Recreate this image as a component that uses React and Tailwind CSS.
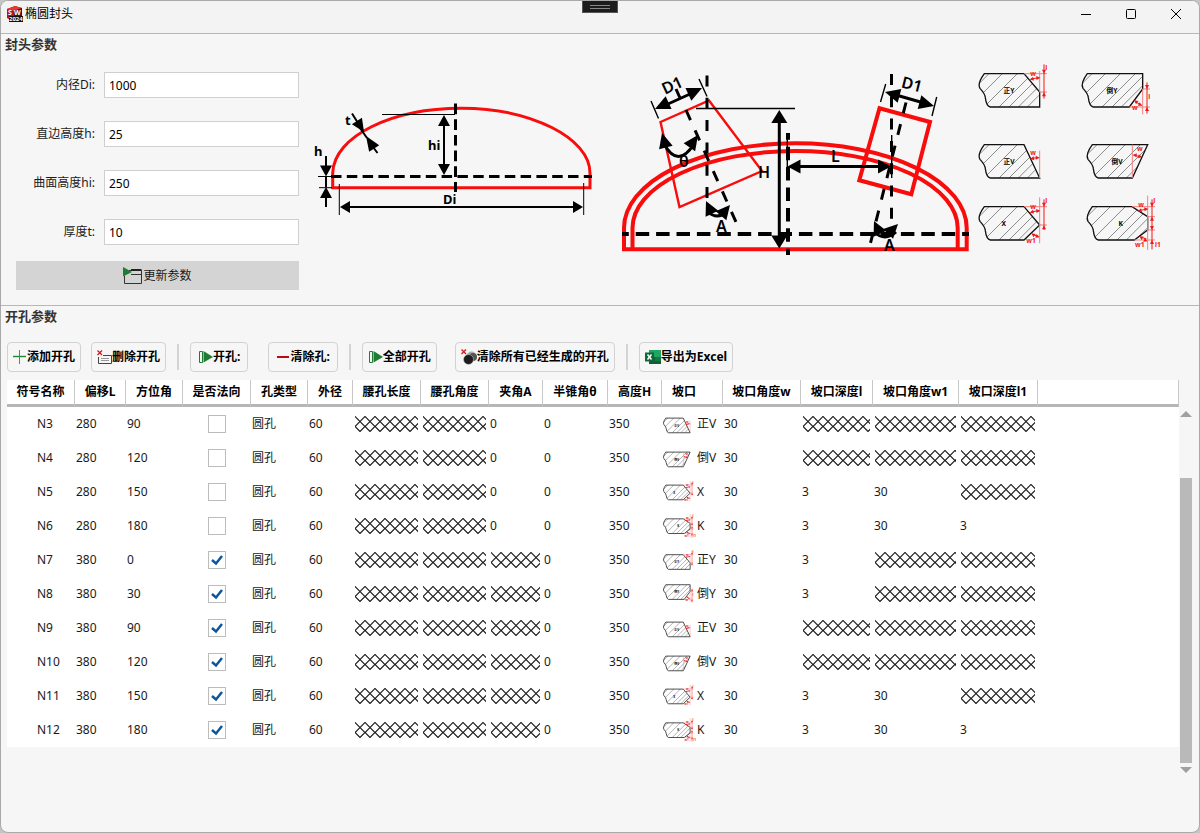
import { useId } from "react";
import clsx from "clsx";

const FIELDS = [
  { id: "di", label: "内径Di:", value: "1000" },
  { id: "h", label: "直边高度h:", value: "25" },
  { id: "hi", label: "曲面高度hi:", value: "250" },
  { id: "t", label: "厚度t:", value: "10" },
];

const COLUMNS = [
  { title: "符号名称", width: "w-[68px]" },
  { title: "偏移L", width: "w-[51px]" },
  { title: "方位角", width: "w-[57px]" },
  { title: "是否法向", width: "w-[68px]" },
  { title: "孔类型", width: "w-[57px]" },
  { title: "外径", width: "w-[45px]" },
  { title: "腰孔长度", width: "w-[68px]" },
  { title: "腰孔角度", width: "w-[68px]" },
  { title: "夹角A", width: "w-[54px]" },
  { title: "半锥角θ", width: "w-[65px]" },
  { title: "高度H", width: "w-[54px]" },
  { title: "坡口", width: "w-[61px]", left: true },
  { title: "坡口角度w", width: "w-[78px]" },
  { title: "坡口深度l", width: "w-[72px]" },
  { title: "坡口角度w1", width: "w-[86px]" },
  { title: "坡口深度l1", width: "w-[79px]" },
];

// null = the parameter does not apply, the cell is hatched
const ROWS = [
  { name: "N3", offset: 280, azimuth: 90, normal: false, groove: "正V", l: null, w1: null, l1: null },
  { name: "N4", offset: 280, azimuth: 120, normal: false, groove: "倒V", l: null, w1: null, l1: null },
  { name: "N5", offset: 280, azimuth: 150, normal: false, groove: "X", l: 3, w1: 30, l1: null },
  { name: "N6", offset: 280, azimuth: 180, normal: false, groove: "K", l: 3, w1: 30, l1: 3 },
  { name: "N7", offset: 380, azimuth: 0, normal: true, groove: "正Y", l: 3, w1: null, l1: null },
  { name: "N8", offset: 380, azimuth: 30, normal: true, groove: "倒Y", l: 3, w1: null, l1: null },
  { name: "N9", offset: 380, azimuth: 90, normal: true, groove: "正V", l: null, w1: null, l1: null },
  { name: "N10", offset: 380, azimuth: 120, normal: true, groove: "倒V", l: null, w1: null, l1: null },
  { name: "N11", offset: 380, azimuth: 150, normal: true, groove: "X", l: 3, w1: 30, l1: null },
  { name: "N12", offset: 380, azimuth: 180, normal: true, groove: "K", l: 3, w1: 30, l1: 3 },
];

// right side of each plate, starting from the lower left corner
const GROOVES = {
  "正Y": { edge: "H182 V55 L135 0", left: -3, top: -32, height: 137 },
  "倒Y": { edge: "H142 L182 46 V0", left: 12, top: -5, height: 131 },
  "正V": { edge: "H182 L135 0", left: -3, top: -28, height: 134 },
  "倒V": { edge: "H136 L182 0", left: -3, top: -28, height: 134 },
  X: { edge: "H135 L182 55 L135 0", left: -3, top: -28, height: 146 },
  K: { edge: "H142 L182 70 V30 L135 0", left: -3, top: -33, height: 165 },
};

const HATCH = "M-70 100L30 0M-30 100L70 0M15 100L115 0M60 100L160 0M90 100L190 0M118 100L218 0M145 100L245 0";

/* ---------- drawings ---------- */

// arrow head with its tip at x,y; angle 0 points right
function Head({ x, y, angle, len = 10, half = 5 }) {
  return (
    <polygon
      points={`0,0 ${-len},${-half} ${-len},${half}`}
      transform={`translate(${x} ${y}) rotate(${angle})`}
      fill="#000"
    />
  );
}

function GrooveMarks({ type }) {
  const dim = { stroke: "#f01818", strokeWidth: 3, fill: "none" };
  const thin = { stroke: "#f58080", strokeWidth: 3, fill: "none" };
  const head = (x, y, angle) => (
    <polygon points="0,0 -12,-6 -12,6" fill="#f01818" transform={`translate(${x} ${y}) rotate(${angle})`} />
  );
  const text = (x, y, t) => (
    <text x={x} y={y} fontSize="20" fontWeight="700" fill="#f01818">
      {t}
    </text>
  );
  switch (type) {
    case "正Y":
      return (
        <>
          <path d="M135 0H204M182 -8V55H204" {...thin} />
          <path d="M156 16L180 12M195 -28V75" {...dim} />
          {head(152, 18, 165)}
          {head(184, 12, -5)}
          {head(195, 0, 90)}
          {head(195, 56, -90)}
          {text(154, 7, "w")}
          {text(199, -12, "l")}
        </>
      );
    case "倒Y":
      return (
        <>
          <path d="M182 46V122M182 46H204M142 100H204" {...thin} />
          <path d="M160 84L178 94M195 26V120" {...dim} />
          {head(156, 80, 215)}
          {head(181, 96, 25)}
          {head(195, 46, 90)}
          {head(195, 100, -90)}
          {text(150, 109, "w")}
          {text(199, 77, "l")}
        </>
      );
    case "正V":
      return (
        <>
          <path d="M182 18V100" {...thin} />
          <path d="M158 41L178 39" {...dim} />
          {head(153, 43, 170)}
          {head(182, 39, 0)}
          {text(154, 31, "w")}
        </>
      );
    case "倒V":
      return (
        <>
          <path d="M136 0V100" {...thin} />
          <path d="M140 32L162 36" {...dim} />
          {head(137, 31, 185)}
          {head(166, 37, 10)}
          {text(150, 19, "w")}
        </>
      );
    case "X":
      return (
        <>
          <path d="M135 0H204M182 -28V110M182 55H204" {...thin} />
          <path d="M156 16L180 12M195 -22V70M160 83L178 90" {...dim} />
          {head(152, 18, 165)}
          {head(184, 12, -5)}
          {head(195, 0, 90)}
          {head(195, 56, -90)}
          {head(157, 80, 215)}
          {head(182, 92, 20)}
          {text(154, 7, "w")}
          {text(199, -10, "l")}
          {text(142, 110, "w1")}
        </>
      );
    default:
      return (
        <>
          <path d="M135 0H204M182 -33V130M182 30H204M182 70H204M142 100H204" {...thin} />
          <path d="M156 12L180 7M195 -22V128M162 92L178 96" {...dim} />
          {head(152, 14, 165)}
          {head(184, 7, -5)}
          {head(195, 0, 90)}
          {head(195, 30, -90)}
          {head(195, 70, 90)}
          {head(195, 100, -90)}
          {head(157, 88, 215)}
          {head(182, 104, 20)}
          {text(154, 0, "w")}
          {text(199, -10, "l")}
          {text(144, 122, "w1")}
          {text(204, 121, "l1")}
        </>
      );
  }
}

function Groove({ type, small }) {
  const clip = useId();
  const { edge, left, top, height } = GROOVES[type];
  const shape = `M16 0Q-6 30 3 44Q18 60 19 72Q22 98 34 100${edge}Z`;
  return (
    <svg
      viewBox={small ? `-3 ${top} 225 ${height}` : `${left} -35 228 165`}
      className={clsx("overflow-visible", small ? "w-[33px] shrink-0" : "h-[55px] w-[76px]")}
      fontFamily="Noto Sans, Noto Sans CJK SC, sans-serif"
    >
      <clipPath id={clip}>
        <path d={shape} />
      </clipPath>
      <path d={HATCH} stroke="#555" strokeWidth={small ? 3 : 2} clipPath={`url(#${clip})`} />
      <path d={shape} fill="none" stroke="#111" strokeWidth={small ? 5 : 4} />
      <text
        x={{ X: 74, K: 101 }[type] ?? 90}
        y="58"
        fontSize="20"
        fontWeight="700"
        textAnchor="middle"
        fill="#000"
      >
        {type}
      </text>
      <GrooveMarks type={type} />
    </svg>
  );
}

function HeadDiagram() {
  return (
    <svg
      viewBox="0 0 300 150"
      className="mt-2 h-[150px] w-[300px] shrink-0"
      fontFamily="Noto Sans, sans-serif"
      fontWeight="700"
      fontSize="13"
    >
      <path d="M22.7 107.7V93C24 56 82 28.3 151.5 28.3S280 58 280 93V107.7Z" fill="none" stroke="#f80c0c" strokeWidth="3" />
      <path d="M21 96.5H282" stroke="#000" strokeWidth="3" strokeDasharray="10.5 5.3" />
      <path d="M145.5 23.5V112" stroke="#000" strokeWidth="3" strokeDasharray="10.7 5" />
      <path d="M72 34.5H145M8 96.5H22M9 107.7H22M29.3 104V135M273.7 103V135" stroke="#000" />
      <path d="M134 42V88M36 127H268M16 76V90M16 97V107M16 113V127" stroke="#000" strokeWidth="2" />
      <path d="M42 33.5L48 43M50 48L57 58M60 63L67.5 73" stroke="#000" strokeWidth="2" />
      <Head x={134} y={35} angle={-90} half={6} len={11} />
      <Head x={134} y={95} angle={90} half={6} len={11} />
      <Head x={30} y={127} angle={180} half={6} />
      <Head x={273} y={127} angle={0} half={6} />
      <Head x={16} y={96.5} angle={90} half={6} len={11} />
      <Head x={16} y={107} angle={-90} half={6} len={11} />
      <Head x={54} y={52} angle={57} half={6} len={13} />
      <Head x={56} y={56} angle={237} half={6} len={15} />
      <text x="4" y="76">h</text>
      <text x="35" y="45">t</text>
      <text x="118" y="70">hi</text>
      <text x="133" y="124">Di</text>
    </svg>
  );
}

function NozzleDiagram() {
  return (
    <svg
      viewBox="0 0 368 210"
      className="-mt-3 h-[210px] w-[368px] shrink-0"
      fontFamily="Noto Sans, sans-serif"
      fontWeight="600"
      fontSize="16"
    >
      <g fill="none" stroke="#f80c0c" strokeWidth="4">
        <path d="M14 189.3V168A171.3 84.7 0 0 1 356.7 168V189.3Z" />
        <path d="M22.5 189V168A162.6 77 0 0 1 347.7 168V189" />
        <path d="M269.5 48.3L320 62L301.3 134.3L249.3 120.3Z" />
        <path d="M50.5 62L99 40.5L152 111L69.5 147Z" strokeWidth="2.4" />
      </g>
      <g stroke="#000" strokeWidth="4" strokeDasharray="13.5 6.9" strokeDashoffset="6.7">
        <path d="M12 174H359" />
        <path d="M178 73V195" />
      </g>
      <g stroke="#000" strokeWidth="3" strokeDasharray="11 11.3">
        <path d="M97 15.5V142" />
        <path d="M281.5 14V162" />
        <path d="M76 50L126 162" />
        <path d="M296 42.5L260.5 183" />
      </g>
      <path
        d="M86 48.5H185M41 41L48.5 58.5M89 19L97 36.5M177.3 73V107M275.7 24L270.5 42M326.7 37L322 56M281.7 75V118"
        stroke="#000"
        strokeWidth="1.4"
      />
      <path d="M169.3 60V178M188 106.5H272M58 44L80 34M66 29L70 38M286 35L314 43" stroke="#000" strokeWidth="3" />
      <Head x={169.3} y={50} angle={-90} len={13} half={8} />
      <Head x={169.3} y={188.5} angle={90} len={13} half={8} />
      <Head x={177.5} y={106.5} angle={180} len={13} half={7} />
      <Head x={281} y={106.5} angle={0} len={13} half={7} />
      <Head x={45} y={49} angle={155} len={15} half={7} />
      <Head x={92} y={28} angle={-25} len={15} half={7} />
      <Head x={275} y={32} angle={195} len={15} half={7} />
      <Head x={324} y={46} angle={15} len={15} half={7} />

      <g fill="none" stroke="#000" strokeWidth="3">
        <path d="M54 84Q68 109 84 84" />
        <path d="M98 152Q107 160 117 152" />
        <path d="M264 172Q275 182 286 172" />
      </g>
      <Head x={52} y={73} angle={-105} len={15} half={7} />
      <Head x={88} y={75} angle={-55} len={15} half={7} />
      <Head x={96} y={141} angle={-115} len={14} half={7} />
      <Head x={120} y={145} angle={-50} len={14} half={7} />
      <Head x={264} y={161} angle={-115} len={14} half={7} />
      <Head x={288} y={164} angle={-45} len={14} half={7} />

      <text x="62" y="31" textAnchor="middle" transform="rotate(-25 62 25)">D1</text>
      <text x="302" y="30" textAnchor="middle" transform="rotate(14 302 24)">D1</text>
      <text x="69" y="107">θ</text>
      <text x="148" y="118">H</text>
      <text x="221" y="102">L</text>
      <text x="106" y="172">A</text>
      <text x="274" y="191">A</text>
    </svg>
  );
}

function Hatched() {
  const id = useId();
  return (
    <svg className="block h-4 w-full" aria-hidden="true">
      <pattern id={id} width="10" height="16" patternUnits="userSpaceOnUse">
        <path
          d="M-1 -0.5L10 10.5M11 -0.5L0 10.5M0 10.5L5 15.5L10 10.5M-1 11.5L0 10.5M11 11.5L10 10.5"
          fill="none"
          stroke="#1c1c1c"
          strokeWidth="1.2"
        />
      </pattern>
      <rect width="100%" height="16" fill={`url(#${id})`} />
    </svg>
  );
}

/* ---------- icons ---------- */

function AppIcon() {
  return (
    <svg viewBox="0 0 16 16" className="size-4" fontFamily="Noto Sans, sans-serif" fontWeight="700">
      <path d="M0 3L8 0L15 2V12L7 16L0 12Z" fill="#c01414" />
      <path d="M0 3L8 0L15 2L7 5Z" fill="#e23a30" />
      <path d="M7 5L15 2V12L7 16Z" fill="#5c0b0b" />
      <text x="1" y="9" fontSize="7" fill="#fff">S</text>
      <text x="7" y="9" fontSize="7" fill="#fff">W</text>
      <rect x="2" y="10" width="14" height="6" fill="#111" />
      <text x="2" y="15" fontSize="6" fill="#fff">2024</text>
    </svg>
  );
}

function UpdateIcon() {
  return (
    <svg viewBox="0 0 20 18" className="h-[18px] w-5">
      <path d="M6 3.5H18.5V16.5H1.5V9" fill="none" stroke="#333" />
      <path d="M8 3H18.5" stroke="#222" strokeWidth="2" />
      <path d="M8 7.5H18" stroke="#333" />
      <path d="M0 0L9 5L0 9.5Z" fill="#1e7d32" />
    </svg>
  );
}

function AddIcon() {
  return (
    <svg viewBox="0 0 14 14" className="size-3.5">
      <path d="M6.5 0V14" stroke="#777" />
      <path d="M0 6.5H13" stroke="#1e8a36" strokeWidth="1.4" />
    </svg>
  );
}

function DeleteIcon() {
  return (
    <svg viewBox="0 0 15 15" className="size-[15px]" fill="none">
      <path d="M6 5.5H14.5V13.5H1.5V7" stroke="#444" />
      <path d="M4 8.5H12M4 10.5H12" stroke="#999" />
      <path d="M0.5 0.5L5 5M5 0.5L0.5 5" stroke="#d8161d" strokeWidth="1.3" />
    </svg>
  );
}

function PlayIcon() {
  return (
    <svg viewBox="0 0 15 14" className="h-3.5 w-[15px]">
      <path d="M4.5 1.5H1.5V12.5H4.5Z" fill="none" stroke="#1e7d32" />
      <path d="M5.5 1L15 7L5.5 12.5Z" fill="#1e7d32" />
    </svg>
  );
}

function MinusIcon() {
  return (
    <svg viewBox="0 0 14 14" className="size-3.5">
      <path d="M1 7H13" stroke="#b80d12" strokeWidth="2" />
    </svg>
  );
}

function ClearAllIcon() {
  return (
    <svg viewBox="0 0 16 16" className="size-4">
      <circle cx="10.5" cy="7.5" r="5" fill="#aaa" />
      <circle cx="12" cy="8" r="4" fill="#555" />
      <circle cx="7.5" cy="10.5" r="5" fill="#1c1c1c" stroke="#ddd" strokeWidth="0.5" />
      <path d="M0.5 0.5L5 5M5 0.5L0.5 5" stroke="#d8161d" strokeWidth="1.3" />
    </svg>
  );
}

function ExcelIcon() {
  return (
    <svg viewBox="0 0 16 16" className="size-4">
      <path d="M4 1H16V15H4Z" fill="#21a366" />
      <path d="M4 8H16V15H4Z" fill="#185c37" />
      <path d="M10 8H16V12H10Z" fill="#107c41" />
      <rect y="3.5" width="9" height="9" fill="#0b6a35" />
      <path d="M2.5 5.5L6.5 10.5M6.5 5.5L2.5 10.5" stroke="#fff" strokeWidth="1.5" />
    </svg>
  );
}

/* ---------- parts ---------- */

function TitleBar() {
  return (
    <header className="flex h-[33px] items-start justify-between border-b border-[#b4b6c8] bg-[#f3f3f3]">
      <div className="flex h-[26px] items-center gap-0.5 pl-1.5">
        <AppIcon />
        <h1 className="text-black">椭圆封头</h1>
      </div>
      <div className="flex h-[26px] pr-px text-black">
        <button aria-label="最小化" className="flex w-[45px] items-center justify-center">
          <svg viewBox="0 0 10 10" className="size-2.5" fill="none" stroke="currentColor">
            <path d="M0 5.5H10" />
          </svg>
        </button>
        <button aria-label="最大化" className="flex w-[45px] items-center justify-center">
          <svg viewBox="0 0 10 10" className="size-2.5" fill="none" stroke="currentColor">
            <rect x="0.5" y="0.5" width="9" height="9" rx="1" />
          </svg>
        </button>
        <button aria-label="关闭" className="flex w-[45px] items-center justify-center">
          <svg viewBox="0 0 10 10" className="size-2.5" fill="none" stroke="currentColor">
            <path d="M0 0L10 10M10 0L0 10" />
          </svg>
        </button>
      </div>
    </header>
  );
}

function ToolButton({ icon, wide = false, children }) {
  return (
    <button
      className={clsx(
        "flex h-[30px] items-center rounded border border-[#d2d2d2] font-bold whitespace-nowrap text-black hover:bg-white",
        wide ? "px-[7px]" : "px-[5px]"
      )}
    >
      {icon}
      {children}
    </button>
  );
}

function Separator() {
  return <div className="mx-[11px] h-[26px] w-0.5 bg-[#d4d4d4]" />;
}

function NormalCheckbox({ name, checked }) {
  return (
    <div className="relative ml-[25px] size-[18px]">
      <input
        type="checkbox"
        aria-label={`${name} 是否法向`}
        defaultChecked={checked}
        className="peer block size-[18px] appearance-none border border-[#bcbcbc] bg-white"
      />
      <svg
        viewBox="0 0 18 18"
        className="pointer-events-none absolute inset-0 hidden size-[18px] peer-checked:block"
        fill="none"
        stroke="#0b579f"
        strokeWidth="2.5"
      >
        <path d="M4 9L8 12.5L14 5" />
      </svg>
    </div>
  );
}

function Cell({ value }) {
  if (value === null) {
    return (
      <td className="pr-[3px] pl-0.5">
        <Hatched />
      </td>
    );
  }
  return <td className="pl-px">{value}</td>;
}

function HoleRow({ row }) {
  return (
    <tr className="h-[34px]">
      <td className="pl-[30px]">{row.name}</td>
      <Cell value={row.offset} />
      <Cell value={row.azimuth} />
      <td>
        <NormalCheckbox name={row.name} checked={row.normal} />
      </td>
      <Cell value="圆孔" />
      <Cell value="60" />
      <Cell value={null} />
      <Cell value={null} />
      <Cell value={row.normal ? null : 0} />
      <Cell value="0" />
      <Cell value="350" />
      <td className="pl-px">
        <div className="flex items-center gap-px whitespace-nowrap">
          <Groove type={row.groove} small />
          {row.groove}
        </div>
      </td>
      <Cell value="30" />
      <Cell value={row.l} />
      <Cell value={row.w1} />
      <Cell value={row.l1} />
      <td />
    </tr>
  );
}

function HoleTable() {
  return (
    <table className="w-full table-fixed border-separate border-spacing-0 self-start bg-white text-left">
      <thead>
        <tr className="h-[27px] text-black">
          {COLUMNS.map((c) => (
            <th
              key={c.title}
              className={clsx(
                "border-r border-b-[3px] border-r-[#c8c8c8] border-b-[#b6b6b6] font-bold whitespace-nowrap",
                c.left ? "pl-2.5 text-left" : "text-center",
                c.width
              )}
            >
              {c.title}
            </th>
          ))}
          <td className="border-r border-b-[3px] border-r-[#c8c8c8] border-b-[#b6b6b6]" />
        </tr>
      </thead>
      <tbody>
        {ROWS.map((row) => (
          <HoleRow key={row.name} row={row} />
        ))}
      </tbody>
    </table>
  );
}

function ScrollBar() {
  return (
    <div className="flex h-[393px] w-5 shrink-0 flex-col pt-[31px] pl-px">
      <svg viewBox="0 0 12 6" className="h-1.5 w-3">
        <path d="M0 6L6 0L12 6Z" fill="#a0a0a0" />
      </svg>
      <div className="mt-[61px] mb-1 w-3 flex-1 bg-[#b9b9b9]" />
      <svg viewBox="0 0 12 6" className="h-1.5 w-3">
        <path d="M0 0L6 6L12 0Z" fill="#a0a0a0" />
      </svg>
    </div>
  );
}

export default function App() {
  return (
    <div className="bg-[#c4c4c4] font-['Noto_Sans','Noto_Sans_CJK_SC',sans-serif] text-xs text-[#1a1a1a]">
      <div className="relative flex min-h-screen flex-col overflow-hidden rounded-lg border border-[#a9a9a9] bg-[#f6f6f6]">
        {/* docked grip on the top edge */}
        <div className="absolute -top-px left-[581px] flex h-[13px] w-9 flex-col items-center justify-center gap-0.5 border border-[#555] bg-[#1c1c1c]">
          <div className="h-px w-5 bg-[#888]" />
          <div className="h-px w-5 bg-[#888]" />
        </div>
        <TitleBar />

        <section className="border-b border-[#b4b6c8] pb-[15px]">
          <h2 className="h-5 pl-1 text-[13px] leading-5 font-bold text-[#333]">封头参数</h2>
          <div className="flex items-start">
            <form className="w-[298px] shrink-0 pt-[18px] pl-[15px]" onSubmit={(e) => e.preventDefault()}>
              <div className="flex flex-col gap-[23px]">
                {FIELDS.map((f) => (
                  <div key={f.id} className="flex h-[26px] items-center">
                    <label htmlFor={f.id} className="w-[79px] text-right">
                      {f.label}
                    </label>
                    <input
                      id={f.id}
                      type="text"
                      defaultValue={f.value}
                      className="ml-[9px] h-[26px] min-w-0 flex-1 border border-[#cfcfcf] bg-white px-1 text-black outline-none focus:border-[#0b579f]"
                    />
                  </div>
                ))}
              </div>
              <button type="submit" className="mt-4 flex h-[29px] w-full items-center justify-center bg-[#d4d4d4]">
                <UpdateIcon />
                更新参数
              </button>
            </form>
            <div className="flex flex-1 items-start pt-[18px] pl-[11px]">
              <HeadDiagram />
              <NozzleDiagram />
              <div className="-mt-2.5 grid shrink-0 grid-cols-[108px_76px] grid-rows-[71px_62px_55px]">
                {Object.keys(GROOVES).map((type) => (
                  <Groove key={type} type={type} />
                ))}
              </div>
            </div>
          </div>
        </section>

        <section>
          <h2 className="h-5 pl-1 text-[13px] leading-5 font-bold text-[#333]">开孔参数</h2>
          <div className="flex items-center pt-4 pl-1.5">
            <div className="flex gap-2.5">
              <ToolButton icon={<AddIcon />}>添加开孔</ToolButton>
              <ToolButton icon={<DeleteIcon />}>删除开孔</ToolButton>
            </div>
            <Separator />
            <div className="flex gap-5">
              <ToolButton icon={<PlayIcon />} wide>
                开孔:
              </ToolButton>
              <ToolButton icon={<MinusIcon />} wide>
                清除孔:
              </ToolButton>
            </div>
            <Separator />
            <div className="flex gap-[18px]">
              <ToolButton icon={<PlayIcon />}>全部开孔</ToolButton>
              <ToolButton icon={<ClearAllIcon />}>清除所有已经生成的开孔</ToolButton>
            </div>
            <Separator />
            <ToolButton icon={<ExcelIcon />}>导出为Excel</ToolButton>
          </div>
          <div className="mt-2 flex pl-1.5">
            <HoleTable />
            <ScrollBar />
          </div>
        </section>
      </div>
    </div>
  );
}
